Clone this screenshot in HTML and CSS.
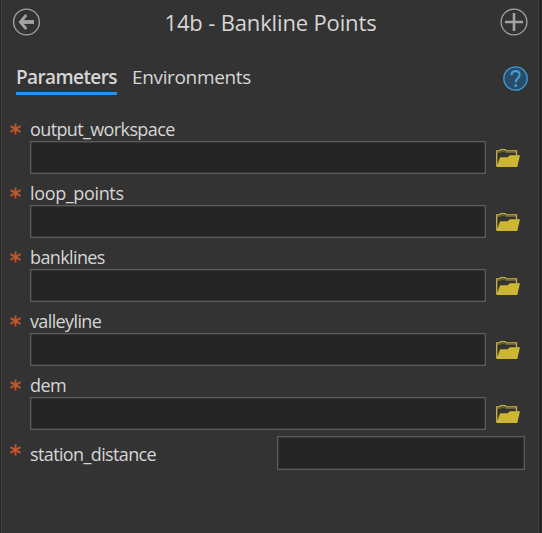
FILE: index.html
```html
<!DOCTYPE html>
<html lang="en">
<head>
<meta charset="utf-8">
<title>14b - Bankline Points</title>
<link rel="stylesheet" href="styles.css">
</head>
<body>
<svg width="0" height="0" class="defs">
  <symbol id="star" viewBox="0 0 12 12"><path d="M5.5 .6v10.8M.5 3.1l10 5.8M10.5 3.1L.5 8.9" fill="none" stroke="#c4562f" stroke-width="1.9"/></symbol>
  <symbol id="folder" viewBox="0 0 24 18"><path d="M.7 17V1.8h2.8L5 .6h4l1.4 1.2h10.1v5" fill="none" stroke="#cbb636" stroke-width="1.3"/><path d="M1.3 3.4h2.6L5.2 2.6h3.6l1.4.8h9.6" fill="none" stroke="#857930" stroke-width=".8"/><path d="M.3 18L4.2 8.2h7.3l2.6-2H24L21.3 18z" fill="#cbb636"/></symbol>
</svg>
<main class="panel">
  <header class="header">
    <svg class="round" viewBox="0 0 28 28"><circle cx="13.5" cy="14" r="12.9" fill="none" stroke="#a3a3a3" stroke-width="1.3"/><path d="M7.5 14h13.5" fill="none" stroke="#a3a3a3" stroke-width="3.8"/><path d="M13.3 7L7.3 14l6 7" fill="none" stroke="#a3a3a3" stroke-width="2.7"/></svg>
    <h1 class="title">14b - Bankline Points</h1>
    <svg class="round" viewBox="0 0 28 28"><circle cx="14" cy="14" r="12.9" fill="none" stroke="#a3a3a3" stroke-width="1.3"/><path d="M14 5v18M5 14h18" stroke="#a3a3a3" stroke-width="2.6"/></svg>
  </header>
  <nav class="tabs">
    <span class="tab active">Parameters</span>
    <span class="tab env">Environments</span>
    <svg class="help" viewBox="0 0 24 24"><circle cx="12" cy="12" r="11.2" fill="#2a4c68" stroke="#3f9bdb" stroke-width="1.3"/><path d="M8.2 8.8C8.2 6 9.7 4.9 12.1 4.9c2.3 0 3.9 1.4 3.9 3.5 0 3.2-3.8 3.5-3.8 7.1" fill="none" stroke="#429fdd" stroke-width="2"/><path d="M11 17.6h2.5v2.5H11z" fill="#429fdd"/></svg>
  </nav>
  <section class="params">
    <div class="row"><svg class="star"><use href="#star"/></svg><label class="label">output_workspace</label><div class="input"></div><svg class="folder"><use href="#folder"/></svg></div>
    <div class="row"><svg class="star"><use href="#star"/></svg><label class="label loose">loop_points</label><div class="input"></div><svg class="folder"><use href="#folder"/></svg></div>
    <div class="row"><svg class="star"><use href="#star"/></svg><label class="label">banklines</label><div class="input"></div><svg class="folder"><use href="#folder"/></svg></div>
    <div class="row"><svg class="star"><use href="#star"/></svg><label class="label">valleyline</label><div class="input"></div><svg class="folder"><use href="#folder"/></svg></div>
    <div class="row"><svg class="star"><use href="#star"/></svg><label class="label">dem</label><div class="input"></div><svg class="folder"><use href="#folder"/></svg></div>
    <div class="row inline"><svg class="star"><use href="#star"/></svg><label class="label">station_distance</label><div class="input"></div></div>
  </section>
</main>
</body>
</html>
```
FILE: styles.css
```css
* { box-sizing: border-box; }
body {
  margin: 0;
  height: 533px;
  overflow: hidden;
  background: #252526;
  color: #d6d6d6;
  font-family: "Open Sans", "Noto Sans", sans-serif;
}
.defs { position: absolute; }
.panel {
  width: 538px;
  height: 533px;
  margin-left: 1px;
  border-left: 1px solid #434346;
  border-right: 1px solid #434346;
  background: #333;
}
.header {
  display: flex;
  align-items: center;
  justify-content: space-between;
  height: 44px;
  padding: 0 10px 0 11px;
}
.round { width: 28px; height: 28px; }
.title {
  margin: 0;
  font-size: 22px;
  font-weight: 400;
  line-height: 30px;
  letter-spacing: -0.15px;
  white-space: nowrap;
}
.tabs {
  display: flex;
  gap: 15px;
  height: 71px;
  padding: 20px 10px 0 14px;
}
.tab {
  height: 31px;
  font-size: 19px;
  line-height: 27px;
  white-space: nowrap;
}
.active {
  width: 101px;
  border-bottom: 3px solid #2693f0;
  font-weight: 600;
  letter-spacing: -0.6px;
}
.env { letter-spacing: -0.35px; }
.help { width: 25px; height: 25px; margin: 2px 0 0 auto; }
.params { display: flex; flex-direction: column; }
.row {
  display: grid;
  grid-template-columns: 20px 456px 24px;
  grid-template-rows: 26px 33px;
  height: 64px;
  padding-left: 8px;
}
.star { width: 12px; height: 12px; margin: 8px 0 0; }
.label {
  grid-column: 2;
  font-size: 18px;
  line-height: 28px;
  letter-spacing: -0.62px;
  white-space: nowrap;
}
.loose { letter-spacing: -0.35px; }
.input {
  grid-column: 2;
  grid-row: 2;
  border: 1px solid #5b5b5b;
  box-shadow: inset 0 0 0 0.5px #484848;
  background: #252525;
}
.folder {
  grid-column: 3;
  grid-row: 2;
  width: 24px;
  height: 18px;
  margin: 8px 0 0 10px;
}
.inline {
  grid-template-columns: 20px 247px 248px;
  grid-template-rows: 34px;
  padding-top: 1px;
}
.inline .label { line-height: 36px; }
.inline .input { grid-column: 3; grid-row: 1; }
```
